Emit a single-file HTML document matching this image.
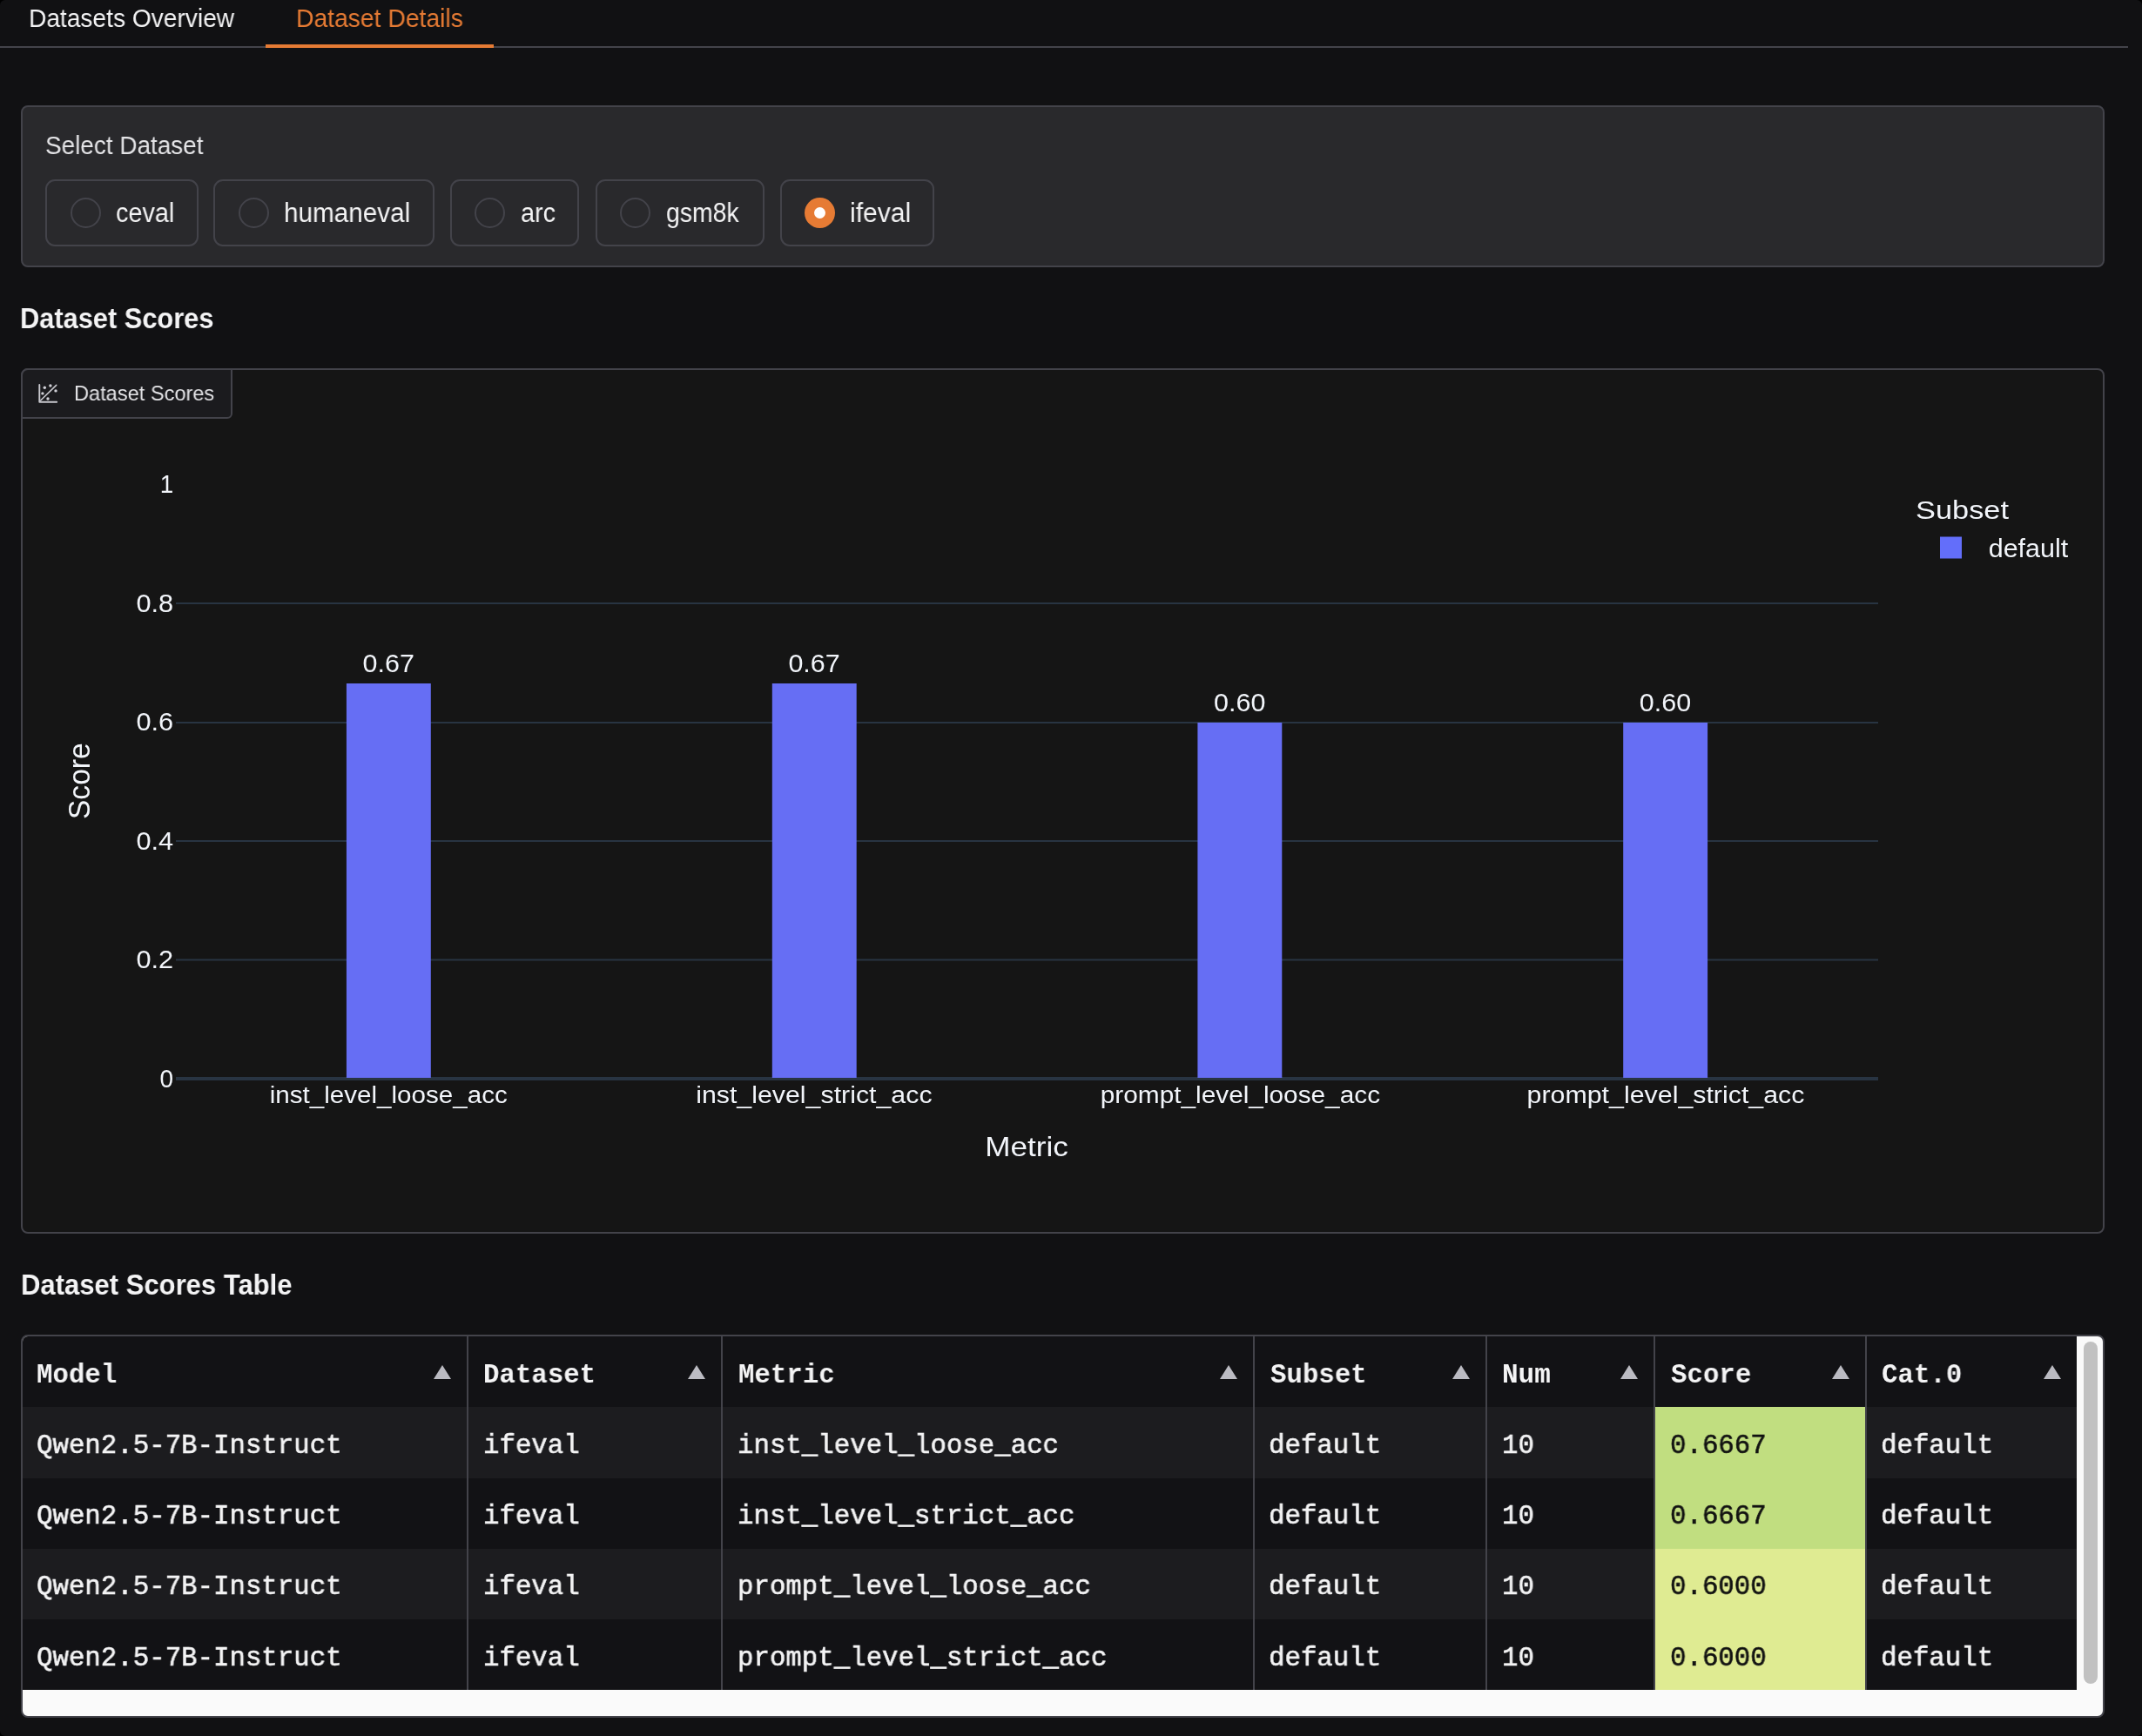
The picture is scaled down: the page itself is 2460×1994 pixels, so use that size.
<!DOCTYPE html>
<html><head><meta charset="utf-8"><title>Dataset Details</title>
<style>
html,body{margin:0;padding:0;} html{background:#000;}
body{width:2460px;height:1994px;background:#111113;position:relative;overflow:hidden;border-radius:6px;font-family:'Liberation Sans', sans-serif;}
.b{position:absolute;box-sizing:border-box;}
.t{position:absolute;white-space:nowrap;line-height:1;transform-origin:0 0;will-change:transform;}
svg.chart{position:absolute;left:0;top:0;will-change:transform;}
</style></head><body>
<div class="b" style="left:0px;top:53px;width:2444px;height:2px;background:#43434a"></div>
<div class="b" style="left:305px;top:51px;width:262px;height:4px;background:#e67b34"></div>
<div class="b" style="left:24px;top:121px;width:2393px;height:186px;background:#29292c;border:2px solid #43434a;border-radius:8px"></div>
<div class="b" style="left:52px;top:206px;width:175.5px;height:77px;border:2px solid #43434a;border-radius:11px"></div>
<div class="b" style="left:80.9px;top:226.8px;width:35px;height:35px;border:2px solid #43434a;border-radius:50%"></div>
<div class="b" style="left:245px;top:206px;width:253.60000000000002px;height:77px;border:2px solid #43434a;border-radius:11px"></div>
<div class="b" style="left:273.8px;top:226.8px;width:35px;height:35px;border:2px solid #43434a;border-radius:50%"></div>
<div class="b" style="left:517px;top:206px;width:148.29999999999995px;height:77px;border:2px solid #43434a;border-radius:11px"></div>
<div class="b" style="left:544.7px;top:226.8px;width:35px;height:35px;border:2px solid #43434a;border-radius:50%"></div>
<div class="b" style="left:684px;top:206px;width:193.60000000000002px;height:77px;border:2px solid #43434a;border-radius:11px"></div>
<div class="b" style="left:712.2px;top:226.8px;width:35px;height:35px;border:2px solid #43434a;border-radius:50%"></div>
<div class="b" style="left:895.5px;top:206px;width:177.9000000000001px;height:77px;border:2px solid #43434a;border-radius:11px"></div>
<div class="b" style="left:923.9px;top:227px;width:35.2px;height:35.2px;background:#e67b34;border-radius:50%"></div>
<div class="b" style="left:934.9px;top:238px;width:13.2px;height:13.2px;background:#fff;border-radius:50%"></div>
<div class="b" style="left:24px;top:423px;width:2393px;height:994px;background:#151515;border:2px solid #43434a;border-radius:8px"></div>
<div class="b" style="left:24px;top:423px;width:243px;height:58px;background:#1b1b1e;border:2px solid #43434a;border-radius:8px 0 6px 0"></div>
<div class="b" style="left:24px;top:1533px;width:2393px;height:440px;background:#fafafa;border:2px solid #43434a;border-radius:8px;overflow:hidden"></div>
<div class="b" style="left:26px;top:1535px;width:2359px;height:81px;background:#121215;border-top-left-radius:6px"></div>
<div class="b" style="left:26px;top:1616px;width:2359px;height:81.5px;background:#1c1c1f"></div>
<div class="b" style="left:26px;top:1697.5px;width:2359px;height:81.5px;background:#121215"></div>
<div class="b" style="left:26px;top:1779px;width:2359px;height:81px;background:#1c1c1f"></div>
<div class="b" style="left:26px;top:1860px;width:2359px;height:81px;background:#121215"></div>
<div class="b" style="left:1901px;top:1616px;width:241px;height:81.5px;background:#c1de80"></div>
<div class="b" style="left:1901px;top:1697.5px;width:241px;height:81.5px;background:#c1de80"></div>
<div class="b" style="left:1901px;top:1779px;width:241px;height:81px;background:#dfeb92"></div>
<div class="b" style="left:1901px;top:1860px;width:241px;height:81px;background:#dfeb92"></div>
<div class="b" style="left:536px;top:1535px;width:2px;height:406px;background:#43434a"></div>
<div class="b" style="left:828px;top:1535px;width:2px;height:406px;background:#43434a"></div>
<div class="b" style="left:1439px;top:1535px;width:2px;height:406px;background:#43434a"></div>
<div class="b" style="left:1706px;top:1535px;width:2px;height:406px;background:#43434a"></div>
<div class="b" style="left:1899px;top:1535px;width:2px;height:406px;background:#43434a"></div>
<div class="b" style="left:2142px;top:1535px;width:2px;height:406px;background:#43434a"></div>
<div class="b" style="left:2393px;top:1541px;width:16px;height:393px;background:#c1c1c1;border-radius:8px"></div>
<div class="b" style="left:497.5px;top:1568px;width:0;height:0;border-left:10px solid transparent;border-right:10px solid transparent;border-bottom:16px solid #bbbbc2"></div>
<div class="b" style="left:789.5px;top:1568px;width:0;height:0;border-left:10px solid transparent;border-right:10px solid transparent;border-bottom:16px solid #bbbbc2"></div>
<div class="b" style="left:1400.5px;top:1568px;width:0;height:0;border-left:10px solid transparent;border-right:10px solid transparent;border-bottom:16px solid #bbbbc2"></div>
<div class="b" style="left:1667.5px;top:1568px;width:0;height:0;border-left:10px solid transparent;border-right:10px solid transparent;border-bottom:16px solid #bbbbc2"></div>
<div class="b" style="left:1860.5px;top:1568px;width:0;height:0;border-left:10px solid transparent;border-right:10px solid transparent;border-bottom:16px solid #bbbbc2"></div>
<div class="b" style="left:2103.5px;top:1568px;width:0;height:0;border-left:10px solid transparent;border-right:10px solid transparent;border-bottom:16px solid #bbbbc2"></div>
<div class="b" style="left:2346.5px;top:1568px;width:0;height:0;border-left:10px solid transparent;border-right:10px solid transparent;border-bottom:16px solid #bbbbc2"></div>
<svg class="chart" width="2460" height="1994" font-family="Liberation Sans, sans-serif"><rect x="202" y="692" width="1955" height="2" fill="#283442"/><rect x="202" y="829" width="1955" height="2" fill="#283442"/><rect x="202" y="965" width="1955" height="2" fill="#283442"/><rect x="202" y="1101.5" width="1955" height="2" fill="#283442"/><rect x="202" y="1237" width="1955" height="4" fill="#283442"/><rect x="397.9" y="785" width="96.9" height="453" fill="#666ef4"/><rect x="886.8" y="785" width="96.9" height="453" fill="#666ef4"/><rect x="1375.4" y="830" width="96.9" height="408" fill="#666ef4"/><rect x="1864.2" y="830" width="96.9" height="408" fill="#666ef4"/><rect x="2228" y="616.5" width="25" height="25" fill="#636efa"/><text x="416.53" y="772.30" font-size="30" textLength="59.31" lengthAdjust="spacingAndGlyphs" fill="#f2f5fa">0.67</text><text x="905.43" y="772.30" font-size="30" textLength="59.31" lengthAdjust="spacingAndGlyphs" fill="#f2f5fa">0.67</text><text x="1394.03" y="817.30" font-size="30" textLength="59.31" lengthAdjust="spacingAndGlyphs" fill="#f2f5fa">0.60</text><text x="1882.83" y="817.30" font-size="30" textLength="59.31" lengthAdjust="spacingAndGlyphs" fill="#f2f5fa">0.60</text><text x="183.64" y="566.10" font-size="30" textLength="15.49" lengthAdjust="spacingAndGlyphs" fill="#f2f5fa">1</text><text x="156.48" y="702.60" font-size="30" textLength="42.73" lengthAdjust="spacingAndGlyphs" fill="#f2f5fa">0.8</text><text x="156.48" y="839.10" font-size="30" textLength="42.73" lengthAdjust="spacingAndGlyphs" fill="#f2f5fa">0.6</text><text x="156.48" y="975.60" font-size="30" textLength="42.73" lengthAdjust="spacingAndGlyphs" fill="#f2f5fa">0.4</text><text x="156.48" y="1112.10" font-size="30" textLength="42.73" lengthAdjust="spacingAndGlyphs" fill="#f2f5fa">0.2</text><text x="183.57" y="1248.60" font-size="30" textLength="15.57" lengthAdjust="spacingAndGlyphs" fill="#f2f5fa">0</text><text x="309.70" y="1266.80" font-size="27" textLength="273.14" lengthAdjust="spacingAndGlyphs" fill="#f2f5fa">inst_level_loose_acc</text><text x="799.18" y="1266.80" font-size="27" textLength="271.38" lengthAdjust="spacingAndGlyphs" fill="#f2f5fa">inst_level_strict_acc</text><text x="1263.80" y="1266.80" font-size="27" textLength="321.25" lengthAdjust="spacingAndGlyphs" fill="#f2f5fa">prompt_level_loose_acc</text><text x="1753.58" y="1266.80" font-size="27" textLength="318.89" lengthAdjust="spacingAndGlyphs" fill="#f2f5fa">prompt_level_strict_acc</text><text x="1131.31" y="1328.00" font-size="32" textLength="95.59" lengthAdjust="spacingAndGlyphs" fill="#f2f5fa">Metric</text><text x="-0.96" y="0.00" font-size="35" textLength="87.77" lengthAdjust="spacingAndGlyphs" fill="#f2f5fa" transform="translate(102.7 940.1) rotate(-90)">Score</text><text x="2200.14" y="596.30" font-size="29.5" textLength="106.79" lengthAdjust="spacingAndGlyphs" fill="#f2f5fa">Subset</text><text x="2283.68" y="640.00" font-size="30" textLength="91.54" lengthAdjust="spacingAndGlyphs" fill="#f2f5fa">default</text><g stroke="#c8c8ce" fill="none" stroke-linecap="round" stroke-linejoin="round"><path d="M45.3 442 V461.8 H65.2" stroke-width="1.9"/><path d="M46.6 460 L64.7 442.4" stroke-width="1.6"/></g><g fill="#d0d0d6"><circle cx="51.3" cy="445.2" r="1.7"/><circle cx="57.9" cy="443" r="1.7"/><circle cx="64" cy="448.9" r="1.7"/><circle cx="48.9" cy="451.9" r="1.7"/><circle cx="55" cy="458" r="1.7"/></g></svg>
<div class="t" style="left:32.52px;top:5.70px;font-family:'Liberation Sans', sans-serif;font-size:30px;font-weight:normal;color:#f4f4f5;transform:scaleX(0.9377);">Datasets Overview</div>
<div class="t" style="left:340.11px;top:5.70px;font-family:'Liberation Sans', sans-serif;font-size:30px;font-weight:normal;color:#e67b34;transform:scaleX(0.9430);">Dataset Details</div>
<div class="t" style="left:52.37px;top:151.70px;font-family:'Liberation Sans', sans-serif;font-size:30px;font-weight:normal;color:#e4e4e7;transform:scaleX(0.9303);">Select Dataset</div>
<div class="t" style="left:132.77px;top:228.95px;font-family:'Liberation Sans', sans-serif;font-size:31px;font-weight:normal;color:#f4f4f5;transform:scaleX(0.9297);">ceval</div>
<div class="t" style="left:325.78px;top:228.95px;font-family:'Liberation Sans', sans-serif;font-size:31px;font-weight:normal;color:#f4f4f5;transform:scaleX(0.9576);">humaneval</div>
<div class="t" style="left:597.67px;top:228.95px;font-family:'Liberation Sans', sans-serif;font-size:31px;font-weight:normal;color:#f4f4f5;transform:scaleX(0.9311);">arc</div>
<div class="t" style="left:764.58px;top:228.95px;font-family:'Liberation Sans', sans-serif;font-size:31px;font-weight:normal;color:#f4f4f5;transform:scaleX(0.9163);">gsm8k</div>
<div class="t" style="left:975.66px;top:228.95px;font-family:'Liberation Sans', sans-serif;font-size:31px;font-weight:normal;color:#f4f4f5;transform:scaleX(0.9696);">ifeval</div>
<div class="t" style="left:23.39px;top:348.21px;font-family:'Liberation Sans', sans-serif;font-size:34px;font-weight:bold;color:#f4f4f5;transform:scaleX(0.9054);">Dataset Scores</div>
<div class="t" style="left:85.32px;top:440.38px;font-family:'Liberation Sans', sans-serif;font-size:24px;font-weight:normal;color:#e4e4e7;transform:scaleX(0.9824);">Dataset Scores</div>
<div class="t" style="left:23.68px;top:1458.31px;font-family:'Liberation Sans', sans-serif;font-size:34px;font-weight:bold;color:#f4f4f5;transform:scaleX(0.9123);">Dataset Scores Table</div>
<div class="t" style="left:42.41px;top:1563.55px;font-family:'Liberation Mono', monospace;font-size:31px;font-weight:bold;color:#f4f4f5;transform:scaleX(0.9918);">Model</div>
<div class="t" style="left:555.32px;top:1563.55px;font-family:'Liberation Mono', monospace;font-size:31px;font-weight:bold;color:#f4f4f5;transform:scaleX(0.9918);">Dataset</div>
<div class="t" style="left:847.81px;top:1563.55px;font-family:'Liberation Mono', monospace;font-size:31px;font-weight:bold;color:#f4f4f5;transform:scaleX(0.9918);">Metric</div>
<div class="t" style="left:1458.90px;top:1563.55px;font-family:'Liberation Mono', monospace;font-size:31px;font-weight:bold;color:#f4f4f5;transform:scaleX(0.9918);">Subset</div>
<div class="t" style="left:1724.72px;top:1563.55px;font-family:'Liberation Mono', monospace;font-size:31px;font-weight:bold;color:#f4f4f5;transform:scaleX(0.9918);">Num</div>
<div class="t" style="left:1919.00px;top:1563.55px;font-family:'Liberation Mono', monospace;font-size:31px;font-weight:bold;color:#f4f4f5;transform:scaleX(0.9918);">Score</div>
<div class="t" style="left:2161.31px;top:1563.55px;font-family:'Liberation Mono', monospace;font-size:31px;font-weight:bold;color:#f4f4f5;transform:scaleX(0.9918);">Cat.0</div>
<div class="t" style="left:42.44px;top:1644.89px;font-family:'Liberation Mono', monospace;font-size:32px;font-weight:normal;color:#f4f4f5;transform:scaleX(0.9608);-webkit-text-stroke:0.6px #f4f4f5">Qwen2.5-7B-Instruct</div>
<div class="t" style="left:555.38px;top:1644.89px;font-family:'Liberation Mono', monospace;font-size:32px;font-weight:normal;color:#f4f4f5;transform:scaleX(0.9608);-webkit-text-stroke:0.6px #f4f4f5">ifeval</div>
<div class="t" style="left:846.88px;top:1644.89px;font-family:'Liberation Mono', monospace;font-size:32px;font-weight:normal;color:#f4f4f5;transform:scaleX(0.9608);-webkit-text-stroke:0.6px #f4f4f5">inst_level_loose_acc</div>
<div class="t" style="left:1456.98px;top:1644.89px;font-family:'Liberation Mono', monospace;font-size:32px;font-weight:normal;color:#f4f4f5;transform:scaleX(0.9608);-webkit-text-stroke:0.6px #f4f4f5">default</div>
<div class="t" style="left:1724.78px;top:1644.89px;font-family:'Liberation Mono', monospace;font-size:32px;font-weight:normal;color:#f4f4f5;transform:scaleX(0.9608);-webkit-text-stroke:0.6px #f4f4f5">10</div>
<div class="t" style="left:1918.04px;top:1644.89px;font-family:'Liberation Mono', monospace;font-size:32px;font-weight:normal;color:#111111;transform:scaleX(0.9608);-webkit-text-stroke:0.6px #111111">0.6667</div>
<div class="t" style="left:2160.38px;top:1644.89px;font-family:'Liberation Mono', monospace;font-size:32px;font-weight:normal;color:#f4f4f5;transform:scaleX(0.9608);-webkit-text-stroke:0.6px #f4f4f5">default</div>
<div class="t" style="left:42.44px;top:1726.19px;font-family:'Liberation Mono', monospace;font-size:32px;font-weight:normal;color:#f4f4f5;transform:scaleX(0.9608);-webkit-text-stroke:0.6px #f4f4f5">Qwen2.5-7B-Instruct</div>
<div class="t" style="left:555.38px;top:1726.19px;font-family:'Liberation Mono', monospace;font-size:32px;font-weight:normal;color:#f4f4f5;transform:scaleX(0.9608);-webkit-text-stroke:0.6px #f4f4f5">ifeval</div>
<div class="t" style="left:846.88px;top:1726.19px;font-family:'Liberation Mono', monospace;font-size:32px;font-weight:normal;color:#f4f4f5;transform:scaleX(0.9608);-webkit-text-stroke:0.6px #f4f4f5">inst_level_strict_acc</div>
<div class="t" style="left:1456.98px;top:1726.19px;font-family:'Liberation Mono', monospace;font-size:32px;font-weight:normal;color:#f4f4f5;transform:scaleX(0.9608);-webkit-text-stroke:0.6px #f4f4f5">default</div>
<div class="t" style="left:1724.78px;top:1726.19px;font-family:'Liberation Mono', monospace;font-size:32px;font-weight:normal;color:#f4f4f5;transform:scaleX(0.9608);-webkit-text-stroke:0.6px #f4f4f5">10</div>
<div class="t" style="left:1918.04px;top:1726.19px;font-family:'Liberation Mono', monospace;font-size:32px;font-weight:normal;color:#111111;transform:scaleX(0.9608);-webkit-text-stroke:0.6px #111111">0.6667</div>
<div class="t" style="left:2160.38px;top:1726.19px;font-family:'Liberation Mono', monospace;font-size:32px;font-weight:normal;color:#f4f4f5;transform:scaleX(0.9608);-webkit-text-stroke:0.6px #f4f4f5">default</div>
<div class="t" style="left:42.44px;top:1807.49px;font-family:'Liberation Mono', monospace;font-size:32px;font-weight:normal;color:#f4f4f5;transform:scaleX(0.9608);-webkit-text-stroke:0.6px #f4f4f5">Qwen2.5-7B-Instruct</div>
<div class="t" style="left:555.38px;top:1807.49px;font-family:'Liberation Mono', monospace;font-size:32px;font-weight:normal;color:#f4f4f5;transform:scaleX(0.9608);-webkit-text-stroke:0.6px #f4f4f5">ifeval</div>
<div class="t" style="left:846.88px;top:1807.49px;font-family:'Liberation Mono', monospace;font-size:32px;font-weight:normal;color:#f4f4f5;transform:scaleX(0.9608);-webkit-text-stroke:0.6px #f4f4f5">prompt_level_loose_acc</div>
<div class="t" style="left:1456.98px;top:1807.49px;font-family:'Liberation Mono', monospace;font-size:32px;font-weight:normal;color:#f4f4f5;transform:scaleX(0.9608);-webkit-text-stroke:0.6px #f4f4f5">default</div>
<div class="t" style="left:1724.78px;top:1807.49px;font-family:'Liberation Mono', monospace;font-size:32px;font-weight:normal;color:#f4f4f5;transform:scaleX(0.9608);-webkit-text-stroke:0.6px #f4f4f5">10</div>
<div class="t" style="left:1918.04px;top:1807.49px;font-family:'Liberation Mono', monospace;font-size:32px;font-weight:normal;color:#111111;transform:scaleX(0.9608);-webkit-text-stroke:0.6px #111111">0.6000</div>
<div class="t" style="left:2160.38px;top:1807.49px;font-family:'Liberation Mono', monospace;font-size:32px;font-weight:normal;color:#f4f4f5;transform:scaleX(0.9608);-webkit-text-stroke:0.6px #f4f4f5">default</div>
<div class="t" style="left:42.44px;top:1888.79px;font-family:'Liberation Mono', monospace;font-size:32px;font-weight:normal;color:#f4f4f5;transform:scaleX(0.9608);-webkit-text-stroke:0.6px #f4f4f5">Qwen2.5-7B-Instruct</div>
<div class="t" style="left:555.38px;top:1888.79px;font-family:'Liberation Mono', monospace;font-size:32px;font-weight:normal;color:#f4f4f5;transform:scaleX(0.9608);-webkit-text-stroke:0.6px #f4f4f5">ifeval</div>
<div class="t" style="left:846.88px;top:1888.79px;font-family:'Liberation Mono', monospace;font-size:32px;font-weight:normal;color:#f4f4f5;transform:scaleX(0.9608);-webkit-text-stroke:0.6px #f4f4f5">prompt_level_strict_acc</div>
<div class="t" style="left:1456.98px;top:1888.79px;font-family:'Liberation Mono', monospace;font-size:32px;font-weight:normal;color:#f4f4f5;transform:scaleX(0.9608);-webkit-text-stroke:0.6px #f4f4f5">default</div>
<div class="t" style="left:1724.78px;top:1888.79px;font-family:'Liberation Mono', monospace;font-size:32px;font-weight:normal;color:#f4f4f5;transform:scaleX(0.9608);-webkit-text-stroke:0.6px #f4f4f5">10</div>
<div class="t" style="left:1918.04px;top:1888.79px;font-family:'Liberation Mono', monospace;font-size:32px;font-weight:normal;color:#111111;transform:scaleX(0.9608);-webkit-text-stroke:0.6px #111111">0.6000</div>
<div class="t" style="left:2160.38px;top:1888.79px;font-family:'Liberation Mono', monospace;font-size:32px;font-weight:normal;color:#f4f4f5;transform:scaleX(0.9608);-webkit-text-stroke:0.6px #f4f4f5">default</div>
</body></html>
